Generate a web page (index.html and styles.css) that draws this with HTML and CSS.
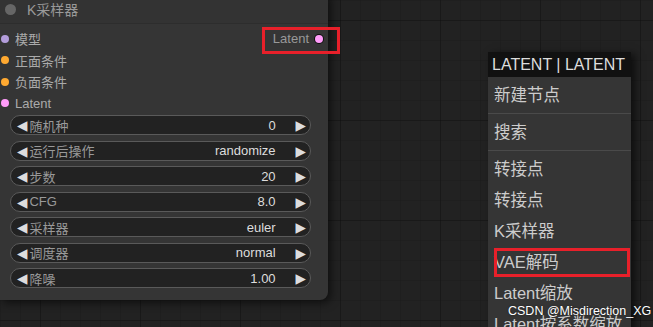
FILE: index.html
```html
<!DOCTYPE html>
<html lang="zh-CN">
<head>
  <meta charset="UTF-8" />
  <meta name="viewport" content="width=device-width, initial-scale=1.0" />
  <title>K采样器</title>
  <link rel="stylesheet" href="styles.css">
</head>
<body>
  <div class="canvas">
    <div class="node">
      <div class="node-title">
        <span class="title-dot"></span>
        <span>K采样器</span>
      </div>
      <div class="node-body">
        <div class="slots">
          <div class="inputs">
            <div class="slot"><span class="dot model"></span>模型</div>
            <div class="slot"><span class="dot cond"></span>正面条件</div>
            <div class="slot"><span class="dot cond"></span>负面条件</div>
            <div class="slot"><span class="dot latent"></span>Latent</div>
          </div>
          <div class="outputs">
            <div class="slot out">Latent<span class="dot latent ring"></span></div>
          </div>
        </div>
        <div class="widgets">
          <div class="widget"><span class="arrow">◀</span><span class="label">随机种</span><span class="value">0</span><span class="arrow">▶</span></div>
          <div class="widget"><span class="arrow">◀</span><span class="label">运行后操作</span><span class="value">randomize</span><span class="arrow">▶</span></div>
          <div class="widget"><span class="arrow">◀</span><span class="label">步数</span><span class="value">20</span><span class="arrow">▶</span></div>
          <div class="widget"><span class="arrow">◀</span><span class="label">CFG</span><span class="value">8.0</span><span class="arrow">▶</span></div>
          <div class="widget"><span class="arrow">◀</span><span class="label">采样器</span><span class="value">euler</span><span class="arrow">▶</span></div>
          <div class="widget"><span class="arrow">◀</span><span class="label">调度器</span><span class="value">normal</span><span class="arrow">▶</span></div>
          <div class="widget"><span class="arrow">◀</span><span class="label">降噪</span><span class="value">1.00</span><span class="arrow">▶</span></div>
        </div>
      </div>
    </div>
    <div class="mark mark-output"></div>

    <div class="menu">
      <div class="menu-head">LATENT | LATENT</div>
      <div class="menu-body">
        <div class="item">新建节点</div>
        <div class="sep"></div>
        <div class="item">搜索</div>
        <div class="sep"></div>
        <div class="item">转接点</div>
        <div class="item">转接点</div>
        <div class="item">K采样器</div>
        <div class="item">VAE解码</div>
        <div class="item">Latent缩放</div>
        <div class="item">Latent按系数缩放</div>
      </div>
    </div>
    <div class="mark mark-vae"></div>

    <div class="watermark">CSDN @Misdirection_XG</div>
  </div>
</body>
</html>
```

FILE: styles.css
```css
body {
  margin: 0;
  font-family: "Liberation Sans", "Noto Sans CJK SC", sans-serif;
  background: #222;
}
.canvas {
  position: relative;
  width: 653px;
  height: 327px;
  overflow: hidden;
  background-color: #222;
  background-image:
    linear-gradient(rgba(0,0,0,0.18) 1px, transparent 1px),
    linear-gradient(90deg, rgba(0,0,0,0.18) 1px, transparent 1px),
    linear-gradient(rgba(0,0,0,0.08) 1px, transparent 1px),
    linear-gradient(90deg, rgba(0,0,0,0.08) 1px, transparent 1px);
  background-size: 100px 100px, 100px 100px, 20px 20px, 20px 20px;
  background-position: 0 20px, 40px 0, 0 0, 0 0;
}

/* node */
.node {
  position: absolute;
  left: 0;
  top: -6px;
  width: 328px;
  height: 306px;
  background: #353535;
  border-radius: 0 0 8px 0;
  box-shadow: 3px 3px 8px rgba(0,0,0,0.55);
}
.node-title {
  height: 30px;
  display: flex;
  align-items: center;
  gap: 11px;
  padding: 0 0 0 5px;
  box-sizing: border-box;
  color: #999;
  font-size: 14px;
  border-bottom: 1px solid #2d2d2d;
  background: #333;
}
.title-dot {
  width: 11px;
  height: 11px;
  border-radius: 50%;
  background: #666;
  margin-top: 1px;
}
.node-body {
  padding-top: 4px;
}
.slots {
  display: flex;
  justify-content: space-between;
}
.slot {
  height: 21.5px;
  display: flex;
  align-items: center;
  gap: 6px;
  font-size: 13px;
  color: #aaa;
}
.inputs .slot {
  padding-left: 1px;
}
.out {
  padding-right: 5px;
  color: #999;
  gap: 6px;
}
.dot {
  width: 8px;
  height: 8px;
  border-radius: 50%;
}
.model { background: #b39ddb; }
.cond { background: #ffa931; }
.latent { background: #ff9cf9; }
.ring {
  box-shadow: 0 0 0 1px #111;
}

.widgets {
  display: flex;
  flex-direction: column;
  gap: 5.5px;
  padding: 1px 0 0 10px;
}
.widget {
  width: 301px;
  height: 20px;
  box-sizing: border-box;
  border: 1px solid #5a5a5a;
  border-radius: 10px;
  background: #222;
  display: flex;
  align-items: center;
  padding: 0 4px 0 6px;
  font-size: 13px;
}
.arrow {
  color: #ddd;
  font-size: 13.5px;
  font-family: "DejaVu Sans", sans-serif;
}
.label {
  color: #999;
  margin-left: 2px;
  flex: 1;
}
.value {
  color: #ddd;
  margin-right: 20px;
}

/* red highlight boxes */
.mark {
  position: absolute;
  border: 3px solid #e8202a;
  box-sizing: border-box;
}
.mark-output {
  left: 262px;
  top: 27px;
  width: 78px;
  height: 27px;
}
.mark-vae {
  left: 494px;
  top: 248px;
  width: 136px;
  height: 29px;
}

/* context menu */
.menu {
  position: absolute;
  left: 488px;
  top: 52px;
  width: 143px;
  box-shadow: 4px 2px 8px rgba(0,0,0,0.6);
}
.menu-head {
  height: 25px;
  line-height: 26px;
  background: #111;
  color: #ddd;
  font-size: 16px;
  padding-left: 4px;
  white-space: nowrap;
}
.menu-body {
  background: #353535;
  padding-top: 3px;
}
.item {
  height: 31px;
  line-height: 31px;
  padding-left: 6px;
  color: #ccc;
  font-size: 16.5px;
  white-space: nowrap;
  overflow: hidden;
}
.sep {
  height: 1px;
  background: #4a4a4a;
  margin: 2px 0 3px;
}

.watermark {
  position: absolute;
  left: 508px;
  top: 304px;
  color: #fff;
  font-size: 12.5px;
  text-shadow: 0 0 2px rgba(0,0,0,0.5);
  white-space: nowrap;
}
```
